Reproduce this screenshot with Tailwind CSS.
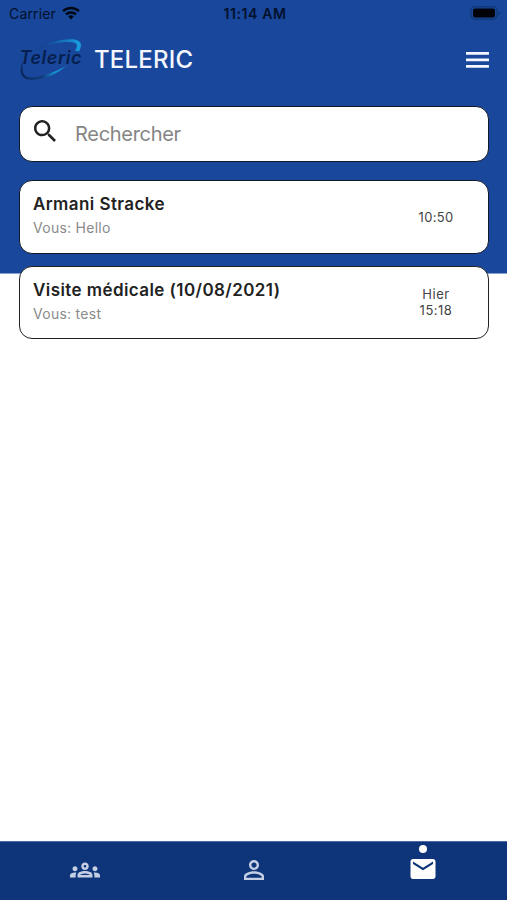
<!DOCTYPE html>
<html lang="fr">
<head>
    <meta charset="UTF-8">
    <meta name="viewport" content="width=device-width, initial-scale=1.0">
    <title>Teleric - Messages</title>
    <script src="https://cdn.jsdelivr.net/npm/@tailwindcss/browser@4"></script>
</head>
<body class="bg-white font-['Inter',sans-serif] antialiased">

    <div class="h-[900px] w-[507px] flex flex-col overflow-hidden bg-linear-to-b from-[#18479b] from-[273px] to-white to-[274px]">

        <!-- Status bar -->
        <div class="h-7 shrink-0 grid grid-cols-3 items-center pl-[9px] pr-[6px] text-[#03102b]">
            <div class="flex items-center gap-[6px] -mt-px">
                <span class="text-[14px] tracking-[0.15px]">Carrier</span>
                <svg class="w-[18px] h-[14px] -mt-[2px]" viewBox="0 0 18 14" fill="none" stroke="#000814" stroke-width="2.5">
                    <path d="M1 5.2a11.5 11.5 0 0 1 16 0" />
                    <path d="M4 8.4a7.2 7.2 0 0 1 10 0" />
                    <path d="M9 13.4 6.2 10.6a4 4 0 0 1 5.6 0z" fill="#000814" stroke="none" />
                </svg>
            </div>
            <div class="-mt-px text-center text-[14px] font-semibold tracking-[0.6px]">11:14 AM</div>
            <svg class="w-[31px] h-[14px] justify-self-end -mt-[3px]" viewBox="0 0 31 14">
                <rect x="1" y="0.8" width="26" height="12.4" rx="4" fill="#18479b" stroke="#123979" stroke-width="1.4" />
                <rect x="3" y="2.6" width="22" height="8.8" rx="2" fill="#000208" />
                <path d="M28.6 5v4.5q1.6-.6 1.6-2.2T28.6 5z" fill="#123979" />
            </svg>
        </div>

        <!-- Header -->
        <header class="h-16 shrink-0 flex items-center pl-[19px] pr-[18px]">
            <svg class="w-16 h-11" viewBox="0 0 64 44">
                <defs>
                    <linearGradient id="swoosh-top" x1="0" x2="1">
                        <stop offset="0" stop-color="#123877" />
                        <stop offset="0.45" stop-color="#1565b0" />
                        <stop offset="1" stop-color="#18a0e0" />
                    </linearGradient>
                    <linearGradient id="swoosh-bottom" x1="0" x2="1">
                        <stop offset="0" stop-color="#0a2558" />
                        <stop offset="0.5" stop-color="#12407f" />
                        <stop offset="0.75" stop-color="#1698d8" />
                        <stop offset="1" stop-color="#1a78c4" />
                    </linearGradient>
                </defs>
                <path d="M19 11C32 2.500 52-.5 59 2.500c4 2 3.500 6 1 11l-4-1c2.500-4 2.500-6 0-7.500C50 2.500 34 4.500 19 11z" fill="url(#swoosh-top)" />
                <path d="M4 23C0 32 1 39 8 41.200 20 43.500 38 37 47.500 27.500c-11 6.500-28 13-37.500 12C3.500 38.500 2.500 31 4 23z" fill="url(#swoosh-bottom)" />
                <text x="0.500" y="26" textLength="62" font-family="Inter, sans-serif" font-size="18" font-weight="600" font-style="italic" fill="#071f4e">Teleric</text>
            </svg>
            <h1 class="ml-[11px] text-[24px] leading-none font-medium tracking-[0.2px] text-[#f4f6fb]">TELERIC</h1>
            <svg class="ml-auto w-[23px] h-4" viewBox="0 0 23 16" fill="#f4f7ff">
                <path d="M0 0h23v2.700H0zM0 6.500h23v2.700H0zM0 13h23v2.700H0z" />
            </svg>
        </header>

        <main class="flex-1 flex flex-col pl-[19px] pr-[18px] pt-[14px]">
            <!-- Search field -->
            <div class="h-14 shrink-0 flex items-center rounded-[13px] border-[1.500px] border-[#111827] bg-white pl-[14px]">
                <svg class="w-[22px] h-[22px] -mt-[6px]" viewBox="3 3 17.500 17.500" fill="#222">
                    <path d="M15.500 14h-.79l-.28-.27C15.410 12.590 16 11.110 16 9.500 16 5.910 13.090 3 9.500 3S3 5.910 3 9.500 5.910 16 9.500 16c1.610 0 3.090-.59 4.230-1.570l.27.28v.79l5 4.990L20.490 19l-4.990-5zm-6 0C7.010 14 5 11.990 5 9.500S7.010 5 9.500 5 14 7.010 14 9.500 11.990 14 9.500 14z" />
                </svg>
                <span class="ml-[19px] text-[20px] tracking-[-0.3px] text-[#858585]">Rechercher</span>
            </div>

            <!-- Conversations -->
            <div class="mt-[18px] flex flex-col gap-3">
                <div class="h-[74px] flex items-center justify-between rounded-[13px] border-[1.500px] border-[#111827] bg-white pl-[13px] pr-[14px]">
                    <div class="-mt-[3px]">
                        <div class="text-[17px] leading-6 font-semibold tracking-[0.42px] text-[#222]">Armani Stracke</div>
                        <div class="text-[14px] leading-6 tracking-[0.27px] text-[#8a8a8a]">Vous: Hello</div>
                    </div>
                    <div class="w-[76px] text-center text-[13px] leading-4 tracking-[0.3px] text-[#444]">10:50</div>
                </div>
                <div class="h-[73px] flex items-center justify-between rounded-[13px] border-[1.500px] border-[#222] bg-white pl-[13px] pr-[14px]">
                    <div class="-mt-[2px]">
                        <div class="text-[17px] leading-6 font-semibold tracking-[0.42px] text-[#222]">Visite médicale (10/08/2021)</div>
                        <div class="text-[14px] leading-6 tracking-[0.27px] text-[#8a8a8a]">Vous: test</div>
                    </div>
                    <div class="-mt-px w-[76px] text-center text-[13px] leading-4 tracking-[0.5px] text-[#444]">Hier<br>15:18</div>
                </div>
            </div>
        </main>

        <!-- Bottom navigation -->
        <nav class="h-[59px] shrink-0 grid grid-cols-3 border-t border-[#4b6da3] bg-[#0e357a]">
            <div class="flex justify-center pt-[13px]">
                <svg class="w-[30px] h-[30px]" viewBox="0 0 24 24" fill="#c5cfe4">
                    <path d="M4 13c1.100 0 2-.9 2-2s-.9-2-2-2-2 .9-2 2 .9 2 2 2zm1.130 1.100C4.760 14.040 4.390 14 4 14c-.99 0-1.930.21-2.780.58C.48 14.900 0 15.620 0 16.430V18h4.500v-1.610c0-.83.23-1.610.63-2.290zM20 13c1.100 0 2-.9 2-2s-.9-2-2-2-2 .9-2 2 .9 2 2 2zm4 3.430c0-.81-.48-1.530-1.220-1.850C21.930 14.210 20.990 14 20 14c-.39 0-.76.04-1.130.1.400.68.630 1.460.630 2.290V18H24v-1.570zM16.240 13.650C15.070 13.130 13.630 12.750 12 12.750s-3.070.39-4.240.9C6.680 14.130 6 15.210 6 16.390V18h12v-1.610c0-1.180-.68-2.260-1.760-2.740zM8.070 16c.09-.23.130-.39.910-.69.970-.38 1.990-.56 3.020-.56s2.050.18 3.020.56c.770.3.810.46.910.69H8.070zM12 8c.55 0 1 .45 1 1s-.45 1-1 1-1-.45-1-1 .45-1 1-1m0-2c-1.660 0-3 1.340-3 3s1.340 3 3 3 3-1.340 3-3-1.340-3-3-3z" />
                </svg>
            </div>
            <div class="flex justify-center pt-[12.500px]">
                <svg class="w-[30px] h-[30px]" viewBox="0 0 24 24" fill="#c5cfe4">
                    <path d="M12 5.900c1.160 0 2.100.94 2.100 2.100s-.94 2.100-2.100 2.100S9.900 9.160 9.900 8s.94-2.100 2.100-2.100m0 9c2.970 0 6.100 1.460 6.100 2.100v1.100H5.900V17c0-.64 3.130-2.100 6.100-2.100M12 4C9.790 4 8 5.790 8 8s1.790 4 4 4 4-1.790 4-4-1.790-4-4-4zm0 9c-2.670 0-8 1.340-8 4v3h16v-3c0-2.660-5.330-4-8-4z" />
                </svg>
            </div>
            <div class="relative flex justify-center pt-[12px]">
                <span class="absolute top-[3px] left-1/2 -translate-x-1/2 w-2 h-2 rounded-full bg-white"></span>
                <svg class="w-[30px] h-[30px]" viewBox="0 0 24 24" fill="#fff">
                    <path d="M20 4H4c-1.100 0-1.990.9-1.990 2L2 18c0 1.100.9 2 2 2h16c1.100 0 2-.9 2-2V6c0-1.100-.9-2-2-2zm0 4l-8 5-8-5V6l8 5 8-5v2z" />
                </svg>
            </div>
        </nav>
    </div>

</body>
</html>
